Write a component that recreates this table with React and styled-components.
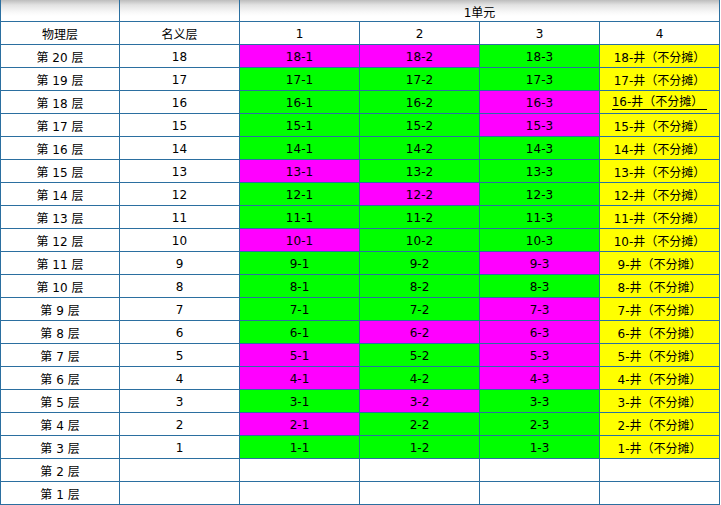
import React from "react";
import styled, { createGlobalStyle } from "styled-components";

const GlobalStyle = createGlobalStyle`
  html, body {
    margin: 0;
    padding: 0;
    background: #fff;
  }
  body {
    font-family: "DejaVu Sans", "Noto Sans CJK SC", sans-serif;
    font-size: 12px;
    color: #000;
  }
`;

const COLORS = {
  M: "#ff00ff",
  G: "#00ff00",
  Y: "#ffff00",
};

// physical floor, nominal floor, colours of the 3 rooms
const floors = [
  [20, 18, "MMG"],
  [19, 17, "GGG"],
  [18, 16, "GGM"],
  [17, 15, "GGM"],
  [16, 14, "GGG"],
  [15, 13, "MGG"],
  [14, 12, "GMG"],
  [13, 11, "GGG"],
  [12, 10, "MGG"],
  [11, 9, "GGM"],
  [10, 8, "GGG"],
  [9, 7, "GGM"],
  [8, 6, "GMM"],
  [7, 5, "MGM"],
  [6, 4, "MGM"],
  [5, 3, "GMG"],
  [4, 2, "MGG"],
  [3, 1, "GGG"],
  [2, null, null],
  [1, null, null],
];

function FloorTable() {
  return (
    <Grid>
      <TopCell />
      <TopCell />
      <TopCell $span={4}>1单元</TopCell>

      <Cell>物理层</Cell>
      <Cell>名义层</Cell>
      <Cell>1</Cell>
      <Cell>2</Cell>
      <Cell>3</Cell>
      <Cell>4</Cell>

      {floors.map(([phys, nom, rooms]) => (
        <React.Fragment key={phys}>
          <Cell>第 {phys} 层</Cell>
          <Cell>{nom ?? ""}</Cell>
          {rooms ? (
            <>
              {rooms.split("").map((c, i) => (
                <Cell key={i} $bg={COLORS[c]}>
                  {nom}-{i + 1}
                </Cell>
              ))}
              <Cell $bg={COLORS.Y}>
                {nom === 16 ? (
                  <Hovered>{nom}-井（不分摊）</Hovered>
                ) : (
                  `${nom}-井（不分摊）`
                )}
              </Cell>
            </>
          ) : (
            <>
              <Cell />
              <Cell />
              <Cell />
              <Cell />
            </>
          )}
        </React.Fragment>
      ))}
    </Grid>
  );
}

export default function App() {
  return (
    <>
      <GlobalStyle />
      <FloorTable />
    </>
  );
}

const Grid = styled.div`
  display: grid;
  grid-template-columns: 119px repeat(5, 120px);
  grid-template-rows: 22px;
  grid-auto-rows: 23px;
  width: 720px;
  border-left: 1px solid #2b6fa0;
`;

const Cell = styled.div`
  box-sizing: border-box;
  display: flex;
  align-items: center;
  justify-content: center;
  border-right: 1px solid #2b6fa0;
  border-bottom: 1px solid #2b6fa0;
  background: ${(p) => p.$bg || "#fff"};
  white-space: nowrap;
  padding-top: 1px;
`;

const TopCell = styled(Cell)`
  grid-column: span ${(p) => p.$span || 1};
  background: linear-gradient(to bottom, #bdbdbd 0px, #e2e2e2 5px, #f8f8f8 12px, #fff 16px);
`;

const Hovered = styled.span`
  border-bottom: 1px solid #000;
  padding-right: 4px;
  line-height: 13px;
`;
